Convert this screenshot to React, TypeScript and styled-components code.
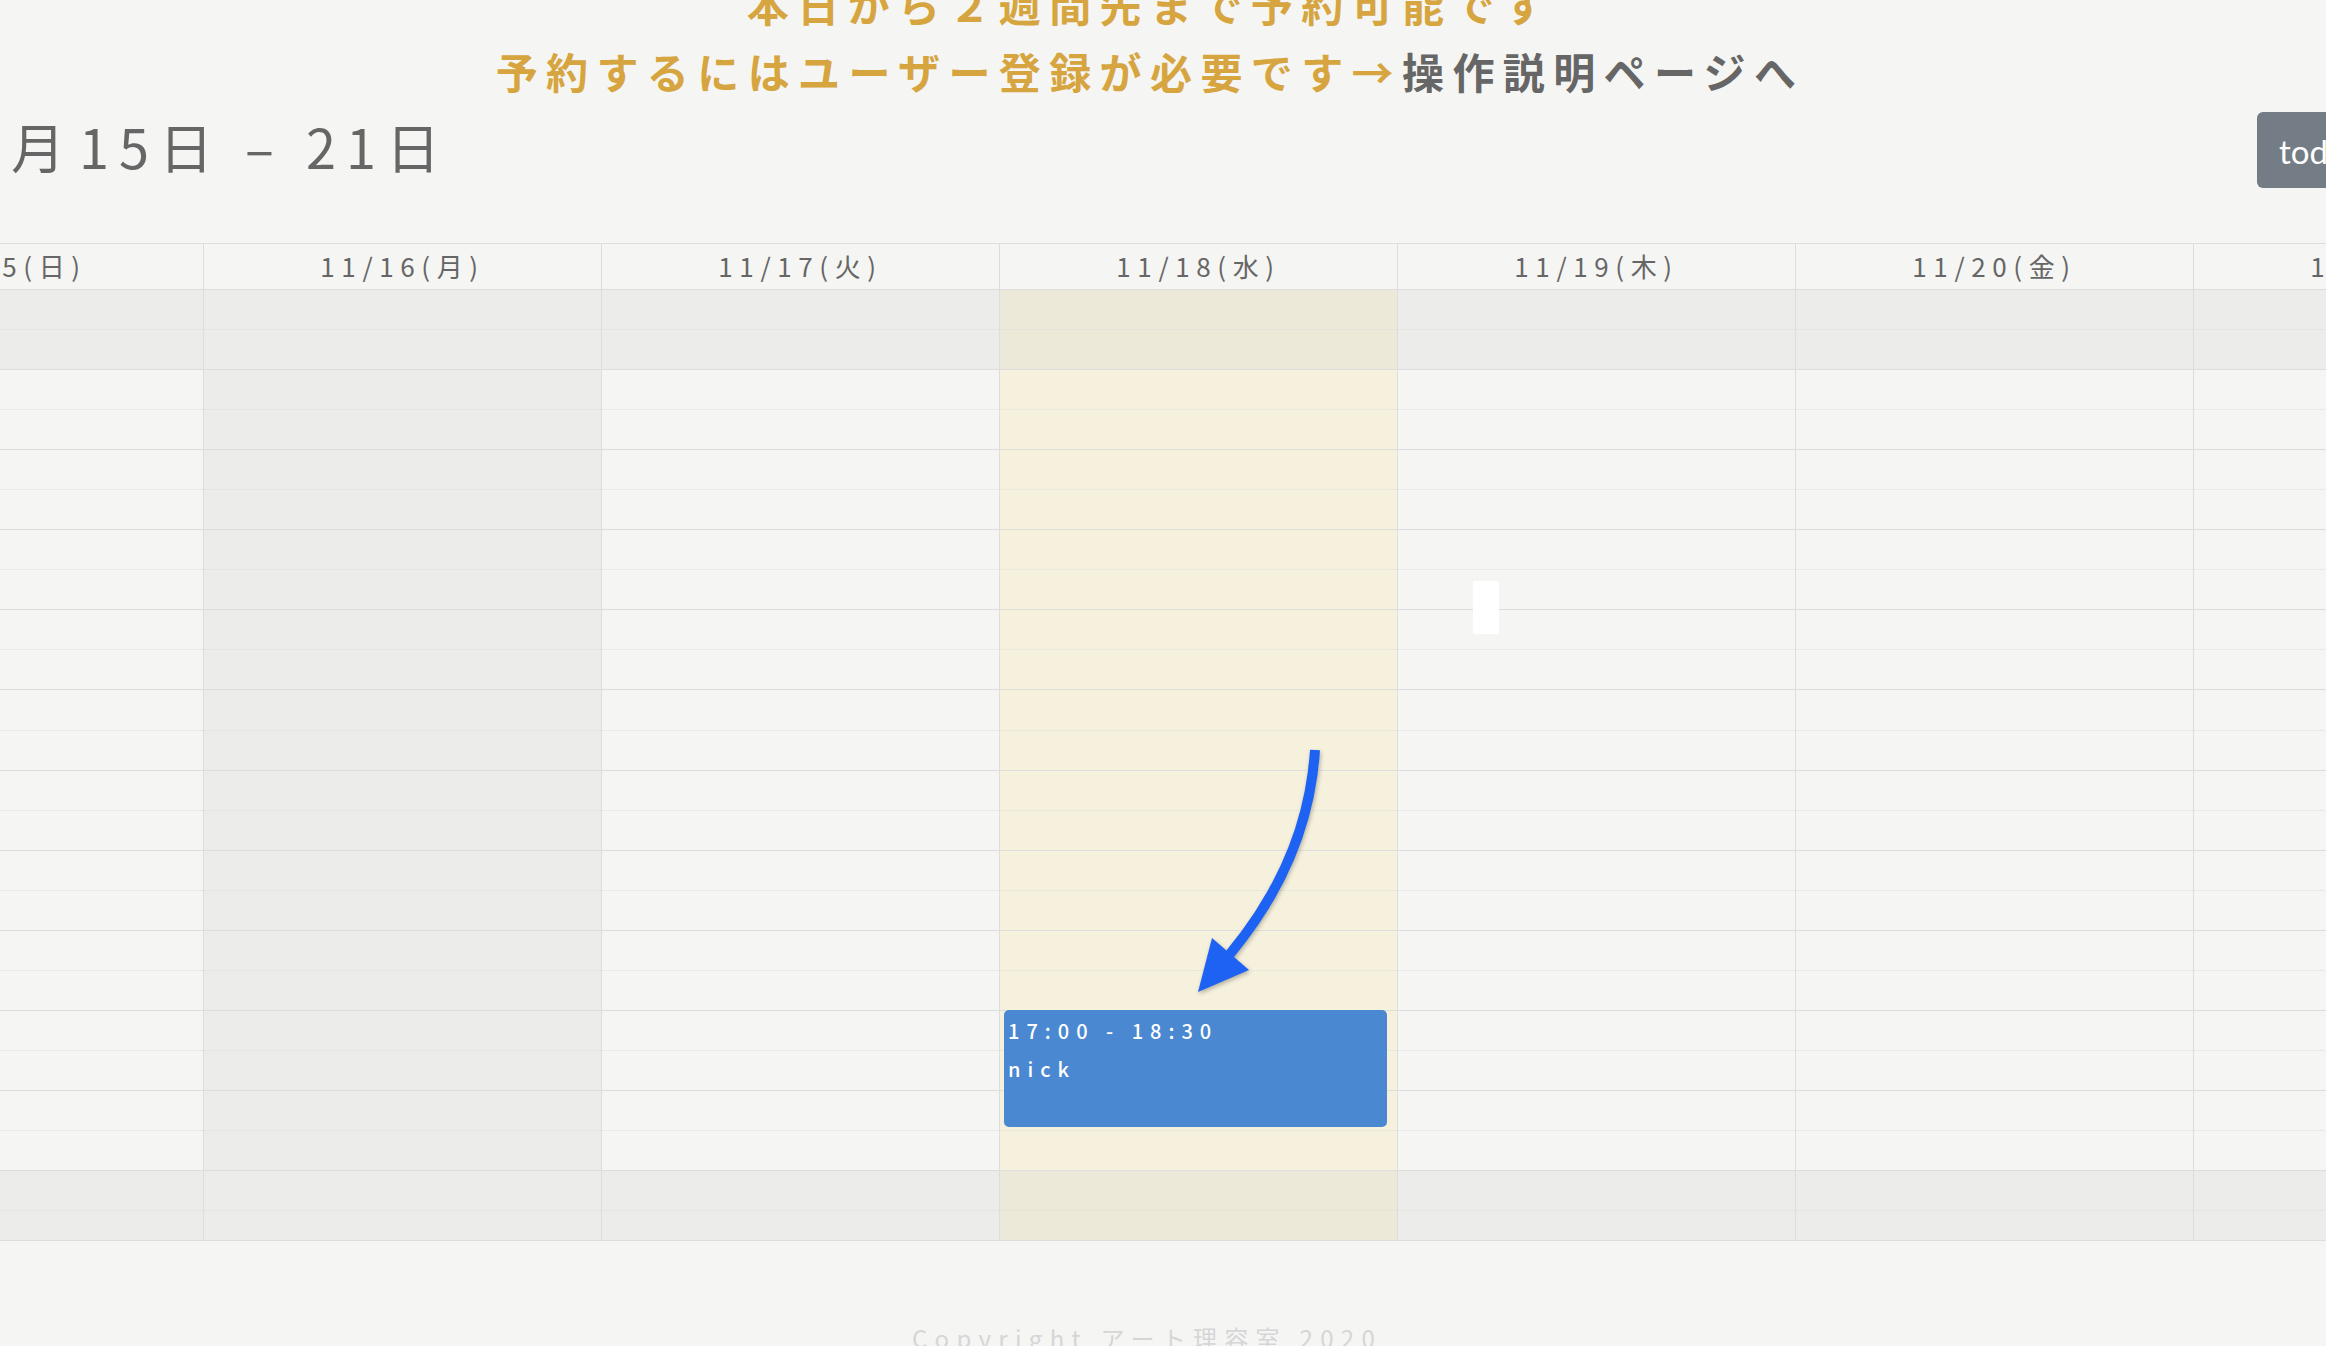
import React from "react";
import styled, { createGlobalStyle } from "styled-components";

const AXIS = 96;
const COL = 398;
const HOUR = 80.1;
const SCROLL_X = 291;
const SCROLL_Y = 30;
const FIRST_HOUR = 8;

const GlobalStyle = createGlobalStyle`
  html, body { margin: 0; padding: 0; overflow: hidden; background: #f5f5f3; }
  #root { width: 100vw; height: 100vh; }
  *, *::before, *::after { box-sizing: border-box; }
`;

const Viewport = styled.div`
  position: relative;
  width: 2326px;
  height: 1346px;
  overflow: hidden;
  background: #f5f5f3;
  font-family: "Noto Sans CJK JP", "Noto Sans", sans-serif;
`;

const Canvas = styled.div`
  width: ${AXIS + COL * 7}px;
  margin-left: -${SCROLL_X}px;
  margin-top: -${SCROLL_Y}px;
  display: flex;
  flex-direction: column;
`;

const Notice = styled.div`
  display: flex;
  flex-direction: column;
  align-items: center;
  font-size: 42px;
  font-weight: 700;
  letter-spacing: 8.4px;
  line-height: 67px;
  color: #d6a540;
`;

const NoticeLine = styled.p`
  margin: 0;
  white-space: nowrap;
`;

const GuideLink = styled.a`
  color: #666;
  text-decoration: none;
`;

const Toolbar = styled.div`
  height: 91px;
  display: flex;
  align-items: center;
  justify-content: space-between;
  padding: 0 34px 0 222px;
  margin-bottom: 48px;
`;

const Title = styled.h2`
  margin: 0;
  padding-bottom: 8px;
  font-size: 54px;
  font-weight: 400;
  line-height: 1;
  letter-spacing: 10px;
  color: #666;
  white-space: nowrap;
`;

const TitleDay = styled.span`
  margin-left: 4px;
`;

const ButtonGroup = styled.div`
  display: flex;
  gap: 12px;
`;

const ToolButton = styled.button<{ $wide?: boolean }>`
  width: ${(p) => (p.$wide ? 132 : 72)}px;
  height: 76px;
  border: none;
  border-radius: 6px;
  background: #747c86;
  color: #fff;
  font-family: Lato, "Noto Sans", sans-serif;
  font-size: 33px;
  text-align: left;
  padding: 3px 0 0 22px;
`;

const Grid = styled.div`
  display: grid;
  grid-template-columns: ${AXIS}px repeat(7, ${COL}px);
`;

const HeaderRow = styled(Grid)`
  height: 47px;
  border-top: 1px solid #dddddd;
  border-bottom: 1px solid #dddddd;
`;

const HeaderCell = styled.div<{ $axis?: boolean }>`
  display: flex;
  align-items: center;
  justify-content: center;
  padding-bottom: 2px;
  border-left: ${(p) => (p.$axis ? "none" : "1px solid #dddddd")};
  font-size: 26px;
  letter-spacing: 6.6px;
  color: #666;
  white-space: nowrap;
`;

const Body = styled(Grid)`
  height: 951px;
  overflow: hidden;
  border-bottom: 1px solid #dddddd;
`;

const AxisCol = styled.div`
  display: flex;
  flex-direction: column;
`;

const AxisLabel = styled.div`
  height: ${HOUR}px;
  flex: 0 0 auto;
  padding: 4px 8px 0 0;
  text-align: right;
  font-size: 20px;
  color: #666;
  border-bottom: 1px solid #dddddd;
`;

const DayCol = styled.div`
  position: relative;
  display: flex;
  flex-direction: column;
  border-left: 1px solid #dddddd;
`;

const bg = (closed: boolean, today: boolean) => {
  if (today) return closed ? "#ece9d8" : "#f6f1dd";
  return closed ? "#ececea" : "#f5f5f3";
};

const HourBlock = styled.div<{ $closed: boolean; $today: boolean }>`
  flex: 0 0 auto;
  height: ${HOUR}px;
  display: flex;
  flex-direction: column;
  background: ${(p) => bg(p.$closed, p.$today)};
`;

const HalfSlot = styled.div<{ $dotted?: boolean }>`
  flex: 1 1 0;
  border-bottom: 1px ${(p) => (p.$dotted ? "dotted" : "solid")} #dddddd;
`;

const EventCard = styled.div`
  position: absolute;
  left: 4px;
  right: 10px;
  border-radius: 5px;
  background: #4a88d1;
  color: #fff;
  padding: 2px 4px;
  font-size: 20px;
  font-weight: 500;
  line-height: 38px;
  letter-spacing: 7px;
  overflow: hidden;
`;

const EventLine = styled.div`
  white-space: nowrap;
`;

const Footer = styled.footer`
  margin-top: 79px;
  padding-right: 6px;
  text-align: center;
  font-size: 24px;
  letter-spacing: 7.3px;
  color: #d6d6d6;
  white-space: nowrap;
`;

const Arrow = styled.svg`
  position: absolute;
  left: 1180px;
  top: 740px;
  width: 150px;
  height: 270px;
  overflow: visible;
  filter: drop-shadow(1px 2px 2px rgba(0, 0, 0, 0.28));
`;

const HoverMark = styled.div`
  position: absolute;
  left: 1473px;
  top: 581px;
  width: 26px;
  height: 53px;
  background: #ffffff;
`;

type Day = { label: string; closed: boolean; today: boolean };

const days: Day[] = [
  { label: "11/15(日)", closed: false, today: false },
  { label: "11/16(月)", closed: true, today: false },
  { label: "11/17(火)", closed: false, today: false },
  { label: "11/18(水)", closed: false, today: true },
  { label: "11/19(木)", closed: false, today: false },
  { label: "11/20(金)", closed: false, today: false },
  { label: "11/21(土)", closed: false, today: false },
];

const hours = Array.from({ length: 12 }, (_, i) => FIRST_HOUR + i);
const isClosedHour = (h: number) => h === 8 || h === 19;

const events = [{ day: 3, start: 17, end: 18.5, time: "17:00 - 18:30", name: "nick" }];

export default function App() {
  return (
    <Viewport>
      <GlobalStyle />
      <Canvas>
        <Notice>
          <NoticeLine>本日から２週間先まで予約可能です</NoticeLine>
          <NoticeLine>
            予約するにはユーザー登録が必要です→<GuideLink href="#">操作説明ページへ</GuideLink>
          </NoticeLine>
        </Notice>

        <Toolbar>
          <Title>
            11月<TitleDay>15日 – 21日</TitleDay>
          </Title>
          <ButtonGroup>
            <ToolButton $wide>today</ToolButton>
            <ToolButton>‹</ToolButton>
            <ToolButton>›</ToolButton>
          </ButtonGroup>
        </Toolbar>

        <HeaderRow>
          <HeaderCell $axis />
          {days.map((d) => (
            <HeaderCell key={d.label}>{d.label}</HeaderCell>
          ))}
        </HeaderRow>

        <Body>
          <AxisCol>
            {hours.map((h) => (
              <AxisLabel key={h}>{h}:00</AxisLabel>
            ))}
          </AxisCol>
          {days.map((d, di) => (
            <DayCol key={d.label}>
              {hours.map((h) => (
                <HourBlock key={h} $closed={d.closed || isClosedHour(h)} $today={d.today}>
                  <HalfSlot $dotted />
                  <HalfSlot />
                </HourBlock>
              ))}
              {events
                .filter((e) => e.day === di)
                .map((e) => (
                  <EventCard
                    key={e.time}
                    style={{
                      top: (e.start - FIRST_HOUR) * HOUR - 1,
                      height: (e.end - e.start) * HOUR - 3,
                    }}
                  >
                    <EventLine>{e.time}</EventLine>
                    <EventLine>{e.name}</EventLine>
                  </EventCard>
                ))}
            </DayCol>
          ))}
        </Body>

        <Footer>Copyright アート理容室 2020</Footer>
      </Canvas>

      <HoverMark />
      <Arrow viewBox="0 0 150 270">
        <path d="M135 10 Q128 120 50 214" fill="none" stroke="#1d62f2" strokeWidth="10" />
        <polygon points="18,252 32,198 69,230" fill="#1d62f2" />
      </Arrow>
    </Viewport>
  );
}
